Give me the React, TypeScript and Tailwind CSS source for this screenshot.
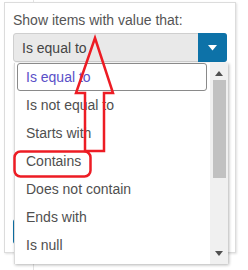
import React from 'react';

const options = [
    'Is equal to',
    'Is not equal to',
    'Starts with',
    'Contains',
    'Does not contain',
    'Ends with',
    'Is null',
];

export default function App() {
    return (
        <div
            className="relative w-[248px] h-[270px] overflow-hidden bg-white text-[14px] leading-[20px]"
            style={{ fontFamily: '"Liberation Sans", Arial, sans-serif' }}
        >
            {/* grid behind the filter menu */}
            <div className="flex h-full">
                <div className="w-[34px] border-r border-[#e3e3e3]" />
                <div className="flex-1" />
            </div>

            {/* filter menu popup */}
            <div className="absolute left-[4px] top-[2px] w-[232px] h-[251px] flex flex-col bg-white border border-[#dcdcdc] shadow-[1px_1px_2px_rgba(0,0,0,0.12)] px-[8px] pt-[7px] pb-[8px]">
                <div className="text-[#555]">Show items with value that:</div>
                <div className="mt-[3px] flex h-[29px] rounded-[3px] border border-[#cfcfcf] bg-[#e9e9e9]">
                    <div className="flex-1 flex items-center pl-[8px] text-[#444]">Is equal to</div>
                    <div className="w-[29px] -my-px -mr-px flex items-center justify-center rounded-r-[3px] bg-[#0d72a8]">
                        <svg width="9" height="6" viewBox="0 0 9 6">
                            <path d="M0 0 H9 L4.5 5.5 Z" fill="#fff" />
                        </svg>
                    </div>
                </div>
                {/* buttons hidden under the open list, only an edge shows */}
                <div className="mt-auto flex gap-[6px]">
                    <div className="h-[25px] w-[90px] rounded-[3px] bg-[#0d72a8]" />
                    <div className="h-[25px] w-[90px] rounded-[3px] border border-[#ccc] bg-[#f3f3f3]" />
                </div>
            </div>

            {/* open dropdown list */}
            <div className="absolute left-[14px] top-[63px] w-[214px] h-[201px] flex bg-white border-l border-[#dadada] shadow-[1px_1px_3px_rgba(0,0,0,0.3)]">
                <div className="flex-1 pl-[2px] pr-[3px]">
                    {options.map((o, i) => (
                        <div
                            key={o}
                            className={`h-[28px] flex items-center pl-[8px] rounded-[3px] border ${i === 0 ? 'border-[#8a8a8a] text-[#5a50c8]' : 'border-transparent text-[#4f4f4f]'}`}
                        >
                            {o}
                        </div>
                    ))}
                </div>
                <div className="w-[18px] flex flex-col items-center bg-[#f0f0f0]">
                    <svg className="mt-[8px]" width="8" height="5" viewBox="0 0 8 5">
                        <path d="M0 5 H8 L4 0 Z" fill="#505050" />
                    </svg>
                    <div className="mt-[4px] w-[13px] h-[98px] bg-[#c1c1c1]" />
                    <svg className="mt-auto mb-[8px]" width="8" height="5" viewBox="0 0 8 5">
                        <path d="M0 0 H8 L4 5 Z" fill="#505050" />
                    </svg>
                </div>
            </div>

            {/* red annotation */}
            <svg className="absolute inset-0 pointer-events-none" width="248" height="270" viewBox="0 0 248 270">
                <polygon
                    points="95,38 113,93 104,93 104,151 85,151 85,93 76,93"
                    fill="none"
                    stroke="#ed1c24"
                    strokeWidth="2.5"
                />
                <rect x="14.5" y="151.5" width="76" height="25" rx="6" fill="none" stroke="#ed1c24" strokeWidth="2.5" />
            </svg>
        </div>
    );
}
